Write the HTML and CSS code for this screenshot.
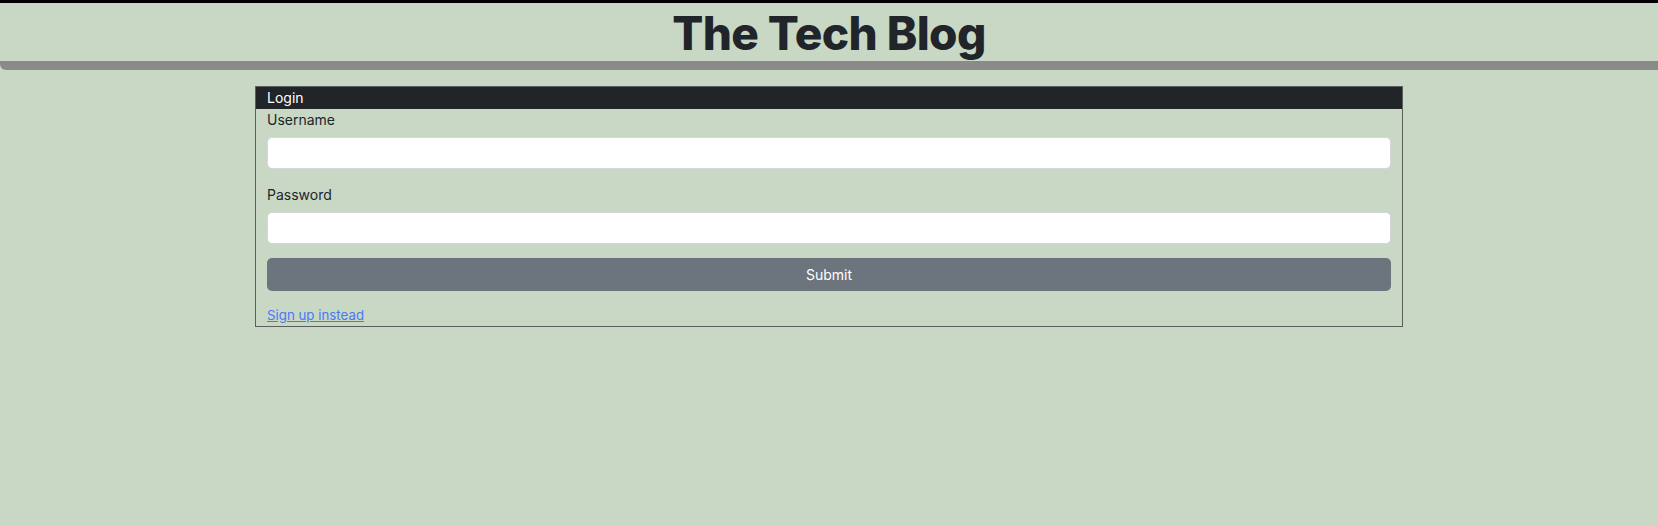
FILE: index.html
```html
<!DOCTYPE html>
<html lang="en">
<head>
<meta charset="utf-8">
<title>The Tech Blog</title>
<link rel="stylesheet" href="styles.css">
</head>
<body>
<header class="site-header">
  <h1 class="site-title">The Tech Blog</h1>
</header>
<main class="main">
  <section class="card">
    <div class="card-header">Login</div>
    <form class="card-body">
      <label class="field-label" for="username">Username</label>
      <input class="field-input" id="username" type="text">
      <label class="field-label field-label-gap" for="password">Password</label>
      <input class="field-input" id="password" type="password">
      <button class="submit-btn" type="button">Submit</button>
      <a class="alt-link" href="#">Sign up instead</a>
    </form>
  </section>
</main>
</body>
</html>
```
FILE: styles.css
```css
* { box-sizing: border-box; }
html, body {
  margin: 0;
  padding: 0;
  background: #c8d8c5;
  font-family: Inter, "Noto Sans", "Liberation Sans", sans-serif;
  color: #212529;
}
.site-header {
  border-top: 3px solid #000;
  border-bottom: 9px solid #8a8a8a;
  border-bottom-left-radius: 6px;
  height: 70px;
  padding-top: 3px;
  display: flex;
  justify-content: center;
  align-items: center;
}
.site-title {
  margin: 0;
  font-size: 46px;
  font-weight: 800;
  letter-spacing: -0.6px;
  line-height: 55px;
  color: #212529;
}
.main {
  padding-top: 16px;
  display: flex;
  justify-content: center;
}
.card {
  width: 1148px;
  border: 1px solid #5a5f5b;
}
.card-header {
  background: #212529;
  color: #fff;
  font-size: 14px;
  line-height: 22px;
  padding: 0 11px;
}
.card-body {
  display: flex;
  flex-direction: column;
  align-items: stretch;
  padding: 0 11px;
}
.field-label {
  font-size: 14px;
  line-height: 21px;
  margin-bottom: 7px;
}
.field-label-gap { margin-top: 15px; }
.field-input {
  height: 32px;
  border: 1px solid #d4d7dc;
  border-radius: 5px;
  background: #fff;
  font: inherit;
  padding: 0 10px;
}
.submit-btn {
  margin-top: 14px;
  height: 33px;
  border: none;
  border-radius: 5px;
  background: #6c757d;
  color: #fff;
  font-family: inherit;
  font-size: 14px;
}
.alt-link {
  align-self: flex-start;
  margin-top: 14px;
  font-size: 13.3px;
  line-height: 21px;
  color: #4a78f5;
  text-decoration: underline;
}
```
